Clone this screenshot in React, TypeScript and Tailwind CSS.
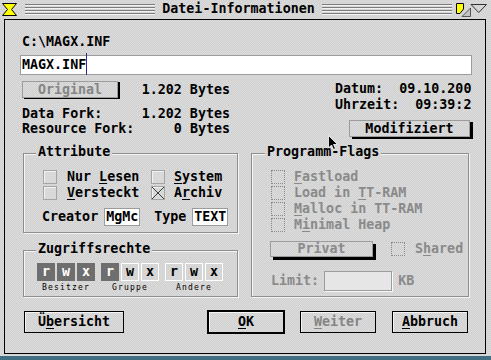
import type { ReactNode } from "react";

const F = "font-['DejaVu_Sans_Mono','Liberation_Mono',monospace] font-bold text-[13.33px]";
const TEX = "bg-[repeating-conic-gradient(#d1d1d1_0_25%,#dbdbdb_0_50%)] bg-[length:2px_2px]";
const LINES =
  "bg-[repeating-linear-gradient(to_bottom,#7c7c7c_0_1px,#f2f2f2_1px_2px,transparent_2px_3px)]";

function U({ children }: { children: ReactNode }) {
  return <span className="underline decoration-1 underline-offset-[2px]">{children}</span>;
}

function Check({ checked, disabled }: { checked?: boolean; disabled?: boolean }) {
  if (disabled) {
    return <span className="block h-[14px] w-[14px] shrink-0 border border-dotted border-[#8a8a8a]" />;
  }
  return (
    <span className="block h-[14px] w-[14px] shrink-0 border border-[#a4a4a4] bg-[#d9d9d9] shadow-[inset_1px_1px_0_#f2f2f2]">
      {checked && (
        <svg width="12" height="12" viewBox="0 0 12 12" className="block">
          <path d="M0 0L12 12M12 0L0 12" stroke="#3a3a3a" strokeWidth="1" />
        </svg>
      )}
    </span>
  );
}

function Perm({ l, on }: { l: string; on?: boolean }) {
  return (
    <span
      className={
        on
          ? "flex h-[18px] w-[18px] items-center justify-center bg-[#6e6e6e] leading-[16px] text-white"
          : "flex h-[18px] w-[18px] items-center justify-center border border-white bg-[#d6d6d6] leading-[16px] text-black"
      }
    >
      {l}
    </span>
  );
}

function Group({ label, perms }: { label: string; perms: [string, boolean][] }) {
  return (
    <div className="flex flex-col items-center">
      <div className="flex gap-[2px]">
        {perms.map(([l, on], i) => (
          <Perm key={i} l={l} on={on} />
        ))}
      </div>
      <span className="mt-[3px] font-['DejaVu_Sans_Mono',monospace] text-[8px] font-normal leading-[8px] tracking-[1.2px]">
        {label}
      </span>
    </div>
  );
}

function Legend({ children, left }: { children: ReactNode; left: string }) {
  return (
    <span className={`absolute top-[-10px] px-[2px] leading-[16px] ${left} ${TEX}`}>{children}</span>
  );
}

const frame =
  "relative border border-[#8e8e8e] shadow-[1px_1px_0_#f5f5f5,inset_1px_1px_0_#f5f5f5]";

export default function App() {
  return (
    <div className={`relative flex h-[360px] w-[491px] flex-col overflow-hidden text-black ${F} ${TEX}`}>
      {/* title bar */}
      <div className="flex h-[19px] shrink-0 items-start">
        <svg className="ml-[2px] mt-[3px] shrink-0" width="15" height="13" viewBox="0 0 15 13">
          <path d="M0.5 0.5H14.5L9.5 6.5L14.5 12.5H0.5L5.5 6.5Z" fill="#ffff00" stroke="#000" />
        </svg>
        <div className={`ml-[8px] mt-[4px] h-[11px] flex-1 ${LINES}`} />
        <span className="px-[7px] pt-[1px] leading-[16px]">Datei-Informationen</span>
        <div className={`mt-[4px] h-[11px] flex-1 ${LINES}`} />
        <svg className="ml-[4px] shrink-0" width="35" height="19" viewBox="0 0 35 19">
          <path d="M0.5 3.5H7.5V9L4 13.5H0.5Z" fill="#ffff00" stroke="#000" />
          <path d="M6 16.5H14.5V8Z" fill="#c4c4c4" stroke="#555" />
          <path d="M15 4.5H30.5L22.75 12.5Z" fill="none" stroke="#333" />
        </svg>
      </div>

      {/* window body */}
      <div className="relative ml-[4px] h-[335px] w-[482px] shrink-0 border border-black">
        <div className="pl-[15px]">
          <div className="ml-[2px] mt-[14px] h-[16px] leading-[16px]">{"C:\\MAGX.INF"}</div>

          <div className="relative mt-[5px] h-[20px] w-[452px] border border-[#9c9c9c] bg-white pl-[1px] pt-[1px] leading-[16px]">
            MAGX.INF
            <span className="absolute left-[65px] top-[-3px] h-[22px] w-px bg-[#2a2a9a]" />
          </div>

          <div className="mt-[5px] flex h-[59px]">
            <div className="ml-[2px] w-[208px]">
              <div className="flex h-[18px] items-start">
                <div className="mt-[1px] flex h-[17px] w-[96px] items-center justify-center border border-[#9c9c9c] leading-[16px] text-[#858585] shadow-[2px_1px_0_#000]">
                  Original
                </div>
                <div className="mt-[2px] flex-1 text-right leading-[16px]">1.202 Bytes</div>
              </div>
              <div className="mt-[8px] flex justify-between leading-[15px]">
                <span>Data Fork:</span>
                <span>1.202 Bytes</span>
              </div>
              <div className="flex justify-between leading-[15px]">
                <span>Resource Fork:</span>
                <span>0 Bytes</span>
              </div>
            </div>
            <div className="ml-[105px] w-[138px]">
              <div className="mt-[1px] whitespace-pre leading-[16px]">{"Datum:  09.10.200"}</div>
              <div className="whitespace-pre leading-[16px]">{"Uhrzeit:  09:39:2"}</div>
              <div className="ml-[14px] mt-[7px] flex h-[17px] w-[121px] items-center justify-center border border-[#9c9c9c] leading-[16px] shadow-[3px_2px_0_#000]">
                Modifiziert
              </div>
            </div>
          </div>

          <div className="ml-[3px] mt-[14px] flex">
            <div className="w-[215px]">
              <div className={`h-[80px] ${frame}`}>
                <Legend left="left-[12px]">Attribute</Legend>
                <div className="pl-[19px] pt-[15px] leading-[16px]">
                  <div className="flex h-[16px] items-center">
                    <div className="flex w-[108px] items-center">
                      <Check />
                      <span className="ml-[10px]">
                        Nur <U>L</U>esen
                      </span>
                    </div>
                    <div className="flex items-center">
                      <Check />
                      <span className="ml-[9px]">
                        <U>S</U>ystem
                      </span>
                    </div>
                  </div>
                  <div className="flex h-[16px] items-center">
                    <div className="flex w-[108px] items-center">
                      <Check />
                      <span className="ml-[10px]">
                        <U>V</U>ersteckt
                      </span>
                    </div>
                    <div className="flex items-center">
                      <Check checked />
                      <span className="ml-[9px]">
                        A<U>r</U>chiv
                      </span>
                    </div>
                  </div>
                  <div className="mt-[7px] flex h-[18px] items-center">
                    <span className="ml-[-1px]">Creator</span>
                    <span className="ml-[6px] flex h-[18px] w-[36px] items-center border border-[#9c9c9c] bg-white pl-[1px]">
                      MgMc
                    </span>
                    <span className="ml-[14px]">Type</span>
                    <span className="ml-[6px] flex h-[18px] w-[36px] items-center border border-[#9c9c9c] bg-white pl-[1px]">
                      TEXT
                    </span>
                  </div>
                </div>
              </div>

              <div className={`mt-[17px] h-[47px] ${frame}`}>
                <Legend left="left-[12px]">Zugriffsrechte</Legend>
                <div className="flex gap-[6px] pl-[13px] pt-[12px]">
                  <Group label="Besitzer" perms={[["r", true], ["w", true], ["x", true]]} />
                  <Group label="Gruppe" perms={[["r", true], ["w", false], ["x", false]]} />
                  <Group label="Andere" perms={[["r", false], ["w", false], ["x", false]]} />
                </div>
              </div>
            </div>

            <div className={`ml-[13px] h-[144px] w-[218px] ${frame}`}>
              <Legend left="left-[13px]">Programm-Flags</Legend>
              <div className="pl-[19px] pt-[15px] leading-[16px] text-[#8a8a8a]">
                <div className="flex h-[16px] items-center">
                  <Check disabled />
                  <span className="ml-[9px]">
                    <U>F</U>astload
                  </span>
                </div>
                <div className="flex h-[16px] items-center">
                  <Check disabled />
                  <span className="ml-[9px]">
                    Load in <U>T</U>T-RAM
                  </span>
                </div>
                <div className="flex h-[16px] items-center">
                  <Check disabled />
                  <span className="ml-[9px]">
                    <U>M</U>alloc in TT-RAM
                  </span>
                </div>
                <div className="flex h-[16px] items-center">
                  <Check disabled />
                  <span className="ml-[9px]">
                    M<U>i</U>nimal Heap
                  </span>
                </div>
                <div className="mt-[8px] flex h-[16px] items-start">
                  <div className="ml-[-1px] flex h-[16px] w-[103px] items-center justify-center border border-[#9c9c9c] shadow-[3px_3px_0_#000]">
                    Privat
                  </div>
                  <div className="ml-[18px] mt-[1px]">
                    <Check disabled />
                  </div>
                  <span className="ml-[10px]">
                    S<U>h</U>ared
                  </span>
                </div>
                <div className="mt-[14px] flex h-[20px] items-center">
                  <span>Limit:</span>
                  <span className="ml-[5px] h-[20px] w-[68px] border border-[#9c9c9c] bg-[#e6e6e6] shadow-[1px_1px_0_#f8f8f8]" />
                  <span className="ml-[6px]">KB</span>
                </div>
              </div>
            </div>
          </div>

          <div className="mt-[13px] flex h-[24px] items-center leading-[16px]">
            <div className="ml-[4px] flex h-[22px] w-[100px] items-center justify-center border border-black shadow-[inset_1px_1px_0_#f4f4f4]">
              Ü<U>b</U>ersicht
            </div>
            <div className="ml-[83px] flex h-[24px] w-[78px] items-center justify-center border-2 border-black shadow-[inset_1px_1px_0_#f4f4f4]">
              <U>O</U>K
            </div>
            <div className="ml-[15px] flex h-[22px] w-[76px] items-center justify-center border border-black text-[#858585] shadow-[inset_1px_1px_0_#f4f4f4]">
              <U>W</U>eiter
            </div>
            <div className="ml-[16px] flex h-[22px] w-[76px] items-center justify-center border border-black shadow-[inset_1px_1px_0_#f4f4f4]">
              <U>A</U>bbruch
            </div>
          </div>
        </div>
      </div>
      <div className="h-[2px] shrink-0" />
      <div className="flex-1 bg-[#3f6f80]" />

      {/* mouse pointer */}
      <svg className="absolute left-[328px] top-[135px]" width="11" height="16" viewBox="0 0 11 16">
        <path d="M0.5 0.5V13L3.5 10L5.5 14.5L7.5 13.5L5.5 9.5H9.5Z" fill="#000" stroke="#fff" strokeWidth="0.8" />
      </svg>
    </div>
  );
}
